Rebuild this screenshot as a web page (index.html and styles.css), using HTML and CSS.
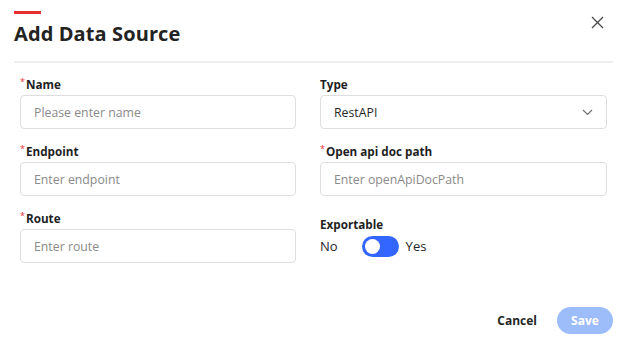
FILE: index.html
```html
<!DOCTYPE html>
<html>
<head>
<meta charset="utf-8">
<link rel="stylesheet" href="styles.css">
</head>
<body>
<div class="dialog">
  <div class="header">
    <div class="accent"></div>
    <h1 class="title">Add Data Source</h1>
    <button class="close" aria-label="Close">
      <svg width="13" height="13" viewBox="0 0 13 13"><path d="M1 1L12 12M12 1L1 12" stroke="#4a4a4a" stroke-width="1.3" fill="none"/></svg>
    </button>
  </div>
  <div class="divider"></div>
  <div class="form">
    <div class="field">
      <label class="label"><span class="req">*</span>Name</label>
      <div class="input placeholder">Please enter name</div>
    </div>
    <div class="field">
      <label class="label">Type</label>
      <div class="input select"><span>RestAPI</span>
        <svg width="11" height="7" viewBox="0 0 11 7"><path d="M1 1L5.5 5.5L10 1" stroke="#6f6f6f" stroke-width="1.2" fill="none"/></svg>
      </div>
    </div>
    <div class="field">
      <label class="label"><span class="req">*</span>Endpoint</label>
      <div class="input placeholder">Enter endpoint</div>
    </div>
    <div class="field">
      <label class="label"><span class="req">*</span>Open api doc path</label>
      <div class="input placeholder">Enter openApiDocPath</div>
    </div>
    <div class="field">
      <label class="label"><span class="req">*</span>Route</label>
      <div class="input placeholder">Enter route</div>
    </div>
    <div class="field export">
      <label class="label">Exportable</label>
      <div class="toggle-row">
        <span class="opt">No</span>
        <span class="toggle"><span class="knob"></span></span>
        <span class="opt">Yes</span>
      </div>
    </div>
  </div>
  <div class="footer">
    <button class="btn-cancel">Cancel</button>
    <button class="btn-save">Save</button>
  </div>
</div>
</body>
</html>
```
FILE: styles.css
```css
* { box-sizing: border-box; }
html, body { margin: 0; padding: 0; background: #fff; }
body { font-family: "Open Sans", "Noto Sans", sans-serif; color: #1f1f1f; }
.dialog { width: 622px; height: 347px; padding: 11px 9px 0 14px; }
.header { position: relative; }
.accent { width: 27px; height: 3px; background: #e8302f; }
.title { margin: 6px 0 0; font-size: 20px; font-weight: 700; line-height: 28px; color: #232323; letter-spacing: 0.1px; }
.close { position: absolute; right: 9px; top: 5px; border: 0; background: none; padding: 0; width: 13px; height: 13px; display: flex; }
.divider { height: 2px; background: #efefef; margin-top: 13px; }
.form { display: grid; grid-template-columns: 276px 287px; column-gap: 24px; row-gap: 14px; padding: 13px 0 0 6px; }
.field { display: flex; flex-direction: column; }
.label { font-size: 11.7px; font-weight: 700; line-height: 16px; color: #1f1f1f; margin-bottom: 3px; }
.req { color: #e8302f; font-weight: 400; font-size: 9px; vertical-align: top; line-height: 12px; margin-right: 1px; }
.input { height: 34px; border: 1px solid #dedede; border-radius: 4px; padding: 0 13px; display: flex; align-items: center; font-size: 12.3px; color: #262626; }
.placeholder { color: #8a8a8a; }
.select { justify-content: space-between; padding-right: 13px; }
.export { padding-top: 6px; }
.label + .toggle-row { margin-top: 1px; }
.toggle-row { display: flex; align-items: center; height: 21px; font-size: 13px; color: #262626; }
.opt { line-height: 21px; }
.toggle { width: 37px; height: 21px; border-radius: 11px; background: #3366ff; margin: 0 7px 0 24px; position: relative; display: inline-block; }
.knob { position: absolute; left: 3px; top: 3px; width: 15px; height: 15px; border-radius: 50%; background: #fff; }
.footer { display: flex; justify-content: flex-end; align-items: center; gap: 20px; margin-top: 44px; }
.btn-cancel { border: 0; background: none; font-family: inherit; font-size: 12px; font-weight: 700; color: #262626; padding: 0; }
.btn-save { border: 0; background: #9dbcfa; color: #fff; font-family: inherit; font-size: 12px; font-weight: 700; width: 56px; height: 27px; border-radius: 14px; padding: 0; }
```
